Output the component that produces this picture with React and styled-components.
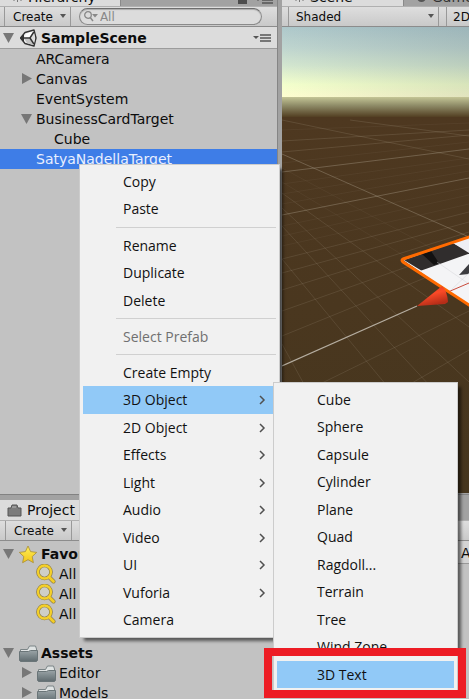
import React from "react";
import styled, { createGlobalStyle, css } from "styled-components";

const GlobalStyle = createGlobalStyle`
  * { box-sizing: border-box; }
  body { margin: 0; background: #a2a2a2; }
  button, input, select { font: inherit; color: inherit; }
`;

const Editor = styled.main`
  position: relative;
  display: grid;
  grid-template-rows: 1fr 205px;
  min-height: 100vh;
  overflow: hidden;
  background: #a2a2a2;
  color: #0c0c0c;
  font: 14px/20px "DejaVu Sans", Verdana, sans-serif;
`;

const UpperDock = styled.div`
  display: grid;
  grid-template-columns: 277px 1fr;
  column-gap: 5px;
  min-width: 0;
`;

const Panel = styled.section`
  display: flex;
  flex-direction: column;
  min-width: 0;
  overflow: hidden;
`;

const HierarchyPanel = styled(Panel)`
  background: #c2c2c2;
  border-right: 1px solid #858585;
  margin-right: -1px;
`;

const ScenePanel = styled(Panel)`
  margin-bottom: 1px;
`;

const TabStrip = styled.div`
  display: flex;
  flex: none;
  align-items: flex-end;
  height: 6px;
  overflow: hidden;
  background: #a2a2a2;
  font-size: 14px;
  line-height: 14px;
`;

const Tab = styled.div`
  display: flex;
  flex: none;
  align-items: center;
  gap: 5px;
  width: ${(p) => p.$width}px;
  height: 16px;
  padding-left: 12px;
  padding-bottom: 2px;
  color: ${(p) => (p.$active ? "#111" : "#333")};
  background: ${(p) => (p.$active ? "#dcdcdc" : "#a2a2a2")};
  border-right: 1px solid #8a8a8a;
`;

const TabActions = styled.div`
  display: flex;
  align-items: flex-end;
  gap: 8px;
  margin-left: auto;
  padding: 0 4px 2px 0;
`;

const Toolbar = styled.div`
  display: flex;
  flex: none;
  height: 21px;
  padding-left: ${(p) => p.$inset || 4}px;
  background: linear-gradient(#dedede, #c9c9c9);
  border-top: 1px solid #b0b0b0;
  border-bottom: 1px solid #8c8c8c;
  font-size: 12px;
`;

const ToolButton = styled.button`
  display: flex;
  align-items: center;
  gap: 7px;
  padding: 0 4px 0 8px;
  background: none;
  border: 0;
  border-left: 1px solid #999;
  border-right: 1px solid #999;
`;

const ToolSelect = styled.label`
  display: flex;
  align-items: center;
  width: 151px;
  flex: none;
  padding-right: 4px;
  border-left: 1px solid #999;
  border-right: 1px solid #999;
`;

const Select = styled.select`
  flex: 1;
  min-width: 0;
  padding: 0 0 0 7px;
  appearance: none;
  background: none;
  border: 0;
`;

const TwoD = styled(ToolButton)`
  flex: none;
  margin-left: 7px;
  padding-left: 6px;
`;

const SearchBox = styled.label`
  display: flex;
  flex: 1;
  align-items: center;
  gap: 1px;
  height: 17px;
  margin: 1px 15px 0 8px;
  padding-left: 4px;
  color: #888;
  background: #dcdcdc;
  border: 1px solid #8a8a8a;
  border-top-color: #6e6e6e;
  border-radius: 9px;
  box-shadow: inset 0 1px 1px #aaa;
`;

const SearchInput = styled.input`
  flex: 1;
  min-width: 0;
  padding: 0;
  line-height: 14px;
  background: none;
  border: 0;
  outline: 0;
  &::placeholder { color: #888; opacity: 1; }
`;

const SceneHeader = styled.div`
  display: flex;
  flex: none;
  align-items: center;
  height: 22px;
  padding: 0 6px 0 3px;
  background: #dcdcdc;
  border-bottom: 1px solid #9c9c9c;
  font-weight: bold;
`;

const HeaderMenuButton = styled.button`
  display: flex;
  margin-left: auto;
  padding: 0;
  background: none;
  border: 0;
`;

const Tree = styled.ul`
  margin: 0;
  padding: 0;
  list-style: none;
`;

const TreeRow = styled.li`
  display: flex;
  align-items: center;
  height: 20px;
  padding-left: ${(p) => p.$level * 18 + 3}px;
  line-height: 18px;
  white-space: nowrap;
  ${(p) => p.$bold && css`font-weight: bold;`}
  ${(p) => p.$selected && css`color: #e8efff; background: #3e7de7;`}
`;

const Foldout = styled.button`
  display: flex;
  flex: none;
  width: 15px;
  padding: 0;
  background: none;
  border: 0;
`;

const FoldSpace = styled.span`
  flex: none;
  width: 15px;
`;

const RowIcon = styled.span`
  display: flex;
  flex: none;
  justify-content: center;
  width: 20px;
  margin-right: 3px;
`;

const SceneView = styled.svg`
  display: block;
  flex: 1 1 0;
  width: 100%;
  min-height: 0;
`;

const ProjectPanel = styled(Panel)`
  border-top: 1px solid #828282;
  padding-top: 5px;
`;

const ProjectTabs = styled.div`
  display: flex;
  flex: none;
  height: 20px;
`;

const ProjectTab = styled.div`
  display: flex;
  align-items: center;
  gap: 5px;
  width: 90px;
  padding-left: 7px;
  background: #dcdcdc;
`;

const ProjectBody = styled.div`
  display: grid;
  grid-template-columns: 453px 1fr;
  flex: 1;
  background: #c2c2c2;
`;

const ProjectTree = styled(Tree)`
  padding-top: 3px;
  & > li:nth-child(4) { margin-bottom: 19px; }
`;

const Breadcrumb = styled.div`
  height: 23px;
  padding-left: 8px;
  overflow: hidden;
  line-height: 24px;
  background: #d4d4d4;
  border-bottom: 1px solid #999;
`;

const Menu = styled.div`
  position: absolute;
  top: ${(p) => p.$top}px;
  left: ${(p) => p.$left}px;
  width: ${(p) => p.$width}px;
  padding: 3px;
  color: #111;
  background: #f1f1f1;
  border: 1px solid #ccc;
  box-shadow: 4px 4px 3px -1px rgba(0, 0, 0, 0.55);
  font: 14px/20px "Open Sans", "Segoe UI", sans-serif;
`;

const MenuGroup = styled.div`
  display: grid;
  grid-auto-rows: 27px 28px;

  & + & {
    margin-top: 4px;
    padding-top: 4px;
    border-top: 1px solid;
    border-image: linear-gradient(90deg, transparent 34px, #d0d0d0 34px) 1;
  }
`;

const MenuItem = styled.button`
  display: flex;
  align-items: center;
  justify-content: space-between;
  padding: 0 10px 0 40px;
  text-align: left;
  background: ${(p) => (p.$open ? "#91c9f7" : "transparent")};
  border: 0;
  &:disabled { color: #707070; }
`;

const Highlight = styled.div`
  position: absolute;
  top: 648px;
  left: 264px;
  width: 202px;
  height: 50px;
  border: 8px solid #ed1c24;
  pointer-events: none;
`;

const Triangle = ({ open }) => (
  <svg width="12" height="12" viewBox="0 0 12 12" aria-hidden="true">
    <path d={open ? "M0 1h11L5.500 11z" : "M1 0v11L11 5.500z"} fill="#777" />
  </svg>
);

const Caret = () => (
  <svg width="6" height="6" viewBox="0 0 6 6" aria-hidden="true">
    <path d="M0 0h6L3 4z" fill="#555" />
  </svg>
);

const ListMenuIcon = () => (
  <svg width="18" height="8" viewBox="0 0 18 8" aria-hidden="true">
    <path d="M0 2h6L3 5z" fill="#555" />
    <path d="M7 1h11M7 4h11M7 7h11" stroke="#555" strokeWidth="1.400" />
  </svg>
);

const LockIcon = () => (
  <svg width="9" height="8" viewBox="0 0 9 8" aria-hidden="true">
    <path d="M0 3h9v5H0z" fill="#4c4c4c" />
    <path d="M2 4V1h5v3" fill="none" stroke="#4c4c4c" />
  </svg>
);

const SearchIcon = () => (
  <svg width="15" height="11" viewBox="0 0 15 11" aria-hidden="true">
    <circle cx="4" cy="4" r="3.300" fill="none" stroke="#888" strokeWidth="1.300" />
    <path d="M6.200 6.500 9 10" stroke="#888" strokeWidth="1.500" />
    <path d="M8 3h6l-3 3.500z" fill="#888" />
  </svg>
);

const UnityIcon = () => (
  <svg width="17" height="18" viewBox="0 0 17 18" aria-hidden="true">
    <path d="M.5 9 5 3.500 14 1l2 8-2 8-9-2.500z" fill="#f2f2f2" stroke="#333" strokeWidth="1.400" strokeLinejoin="round" />
    <path d="M4 9 7 4.500 13 2.500 10 8.300z" fill="#fff" />
    <path d="M4 9.500 7 14l6 2-3-6.300z" fill="#c4c4c4" />
    <path d="M11 9 14 3.500 15 9l-1 5.500z" fill="#dedede" />
    <path d="M3.500 9H10l3.800-6M10 9l3.800 6" fill="none" stroke="#333" strokeWidth="1.500" />
    <path d="M0 9 4 5v8z" fill="#333" />
  </svg>
);

const StarIcon = () => (
  <svg width="20" height="19" viewBox="0 0 20 19" aria-hidden="true">
    <defs>
      <linearGradient id="star" x2="0" y2="1">
        <stop stopColor="#fff05a" />
        <stop offset="1" stopColor="#f2c518" />
      </linearGradient>
    </defs>
    <path d="m10 1 2.600 5.600 6.100.8-4.500 4.200 1.200 6.100L10 14.700l-5.400 3 1.200-6.100L1.300 7.400l6.100-.8z" fill="url(#star)" stroke="#a68b35" strokeWidth=".8" strokeLinejoin="round" />
  </svg>
);

const GoldSearchIcon = () => (
  <svg width="20" height="20" viewBox="0 0 20 20" aria-hidden="true">
    <path d="m13 13 4.500 4.500" stroke="#8a7a45" strokeWidth="4" strokeLinecap="round" />
    <circle cx="8.500" cy="8" r="6.500" fill="#cfcfc6" stroke="#8a7a45" strokeWidth="3.600" />
    <path d="m13 13 4.500 4.500" stroke="#f4cd25" strokeWidth="2.800" strokeLinecap="round" />
    <circle cx="8.500" cy="8" r="6.500" fill="none" stroke="#f4d02b" strokeWidth="2.300" />
  </svg>
);

const FolderIcon = () => (
  <svg width="19" height="17" viewBox="0 0 19 17" aria-hidden="true">
    <defs>
      <linearGradient id="folder" x2="0" y2="1">
        <stop stopColor="#9aa4a7" />
        <stop offset="1" stopColor="#5f6b6f" />
      </linearGradient>
    </defs>
    <path d="M1.500 4.500h7l2-3.500h6l1 3v11h-16z" fill="#dfe3e3" stroke="#7b8486" />
    <path d="M.5 6.500h9l2-1h7v10l-1 1h-16l-1-1z" fill="url(#folder)" stroke="#6a7578" />
  </svg>
);

const SmallFolderIcon = () => (
  <svg width="15" height="13" viewBox="0 0 15 13" aria-hidden="true">
    <path d="M1 4h3l1-3h5l1 3h3v8H1z" fill="#7c7c7c" stroke="#555" strokeLinejoin="round" />
    <path d="M5 4V2h4v2" fill="#999" />
  </svg>
);

const Chevron = () => (
  <svg width="8" height="10" viewBox="0 0 8 10" aria-hidden="true">
    <path d="m2 1 4 4-4 4" fill="none" stroke="#505050" strokeWidth="1.500" />
  </svg>
);

const HashIcon = () => (
  <svg width="11" height="10" viewBox="0 0 11 10" aria-hidden="true">
    <path d="M2 1v8M5.500 0v10M9 1v8M0 3h11" stroke="#777" />
  </svg>
);

const GameIcon = () => (
  <svg width="11" height="11" viewBox="0 0 11 11" aria-hidden="true">
    <circle cx="5.500" cy="5.500" r="4.500" fill="#555" />
  </svg>
);

const majorLines = [
  [282, 215, 469, 178], [282, 172, 469, 149], [282, 152, 469, 135],
  [282, 141, 469, 130], [282, 154, 469, 237], [282, 120, 469, 159],
  [350, 120, 469, 136],
];

const minorLines = [
  [282, 259, 387, 386], [282, 344, 305, 386], [282, 208, 469, 382],
  [282, 193, 469, 327], [282, 182, 469, 295], [282, 168, 469, 268],
  [282, 226, 430, 386], [322, 383, 469, 311], [412, 383, 469, 350],
  [282, 336, 469, 260], [282, 311, 469, 245], [282, 290, 469, 232],
  [282, 273, 469, 222], [282, 259, 469, 212], [282, 246, 469, 204],
  [282, 236, 469, 195], [282, 226, 469, 187], [282, 204, 469, 171],
  [282, 194, 469, 164], [282, 184, 469, 158], [282, 163, 469, 142],
  [282, 130, 469, 123],
];

const Scene = () => (
  <SceneView viewBox="282 27 187 466" preserveAspectRatio="xMinYMin slice" role="img" aria-label="Scene">
    <defs>
      <linearGradient id="sky" x2="0" y2="1">
        <stop stopColor="#aec8cb" />
        <stop offset=".3" stopColor="#bfd5cf" />
        <stop offset=".55" stopColor="#d3e6cf" />
        <stop offset=".82" stopColor="#f3ffcc" />
        <stop offset="1" stopColor="#fffed0" />
      </linearGradient>
      <linearGradient id="shade">
        <stop stopColor="#304050" stopOpacity="0" />
        <stop offset="1" stopColor="#304050" stopOpacity=".14" />
      </linearGradient>
      <linearGradient id="haze" x2="0" y2="1">
        <stop stopColor="#c4c596" />
        <stop offset=".4" stopColor="#8f8c68" />
        <stop offset="1" stopColor="#4d381c" />
      </linearGradient>
      <linearGradient id="ground" x2="0" y2="1">
        <stop stopColor="#4e3820" />
        <stop offset="1" stopColor="#46361e" />
      </linearGradient>
      <linearGradient id="cone" x2=".4" y2="1">
        <stop stopColor="#d33a20" />
        <stop offset=".5" stopColor="#fb4a27" />
        <stop offset="1" stopColor="#b52d18" />
      </linearGradient>
    </defs>
    <path d="M282 27h187v70H282z" fill="url(#sky)" />
    <path d="M282 27h187v70H282z" fill="url(#shade)" />
    <path d="M282 97h187v21H282z" fill="url(#haze)" />
    <path d="M282 117h187v376H282z" fill="url(#ground)" />
    {minorLines.map(([x1, y1, x2, y2], i) => (
      <line key={i} x1={x1} y1={y1} x2={x2} y2={y2} stroke="#b5aa96" strokeOpacity={y1 > 250 || y2 > 300 ? 0.16 : 0.07} />
    ))}
    {majorLines.map(([x1, y1, x2, y2], i) => (
      <line key={i} x1={x1} y1={y1} x2={x2} y2={y2} stroke="#b5aa96" strokeOpacity={i > 1 && i !== 4 ? 0.18 : 0.36} />
    ))}
    <path d="M282 366 417 306" stroke="#b5ada0" strokeWidth="1.200" />
    <path d="M403 260 475 235v75z" fill="#f4f4f6" />
    <path d="m404 260 49-17 20 11-51 17z" fill="#302d2d" />
    <path d="m422 254 9-3 8 12-5 2z" fill="#121111" />
    <path d="m420 271 48-17h5v30l-23 6z" fill="#f4f4f6" />
    <path d="m453 243 16-5v15z" fill="#eeeef4" />
    <path d="m459 275 10-11v10z" fill="#3c3c40" />
    <path d="M451 290l18-17M437 262l32 22" stroke="#d5d5d9" strokeWidth=".5" />
    <path d="m448 292 21-9" stroke="#c94b3c" />
    <path d="m475 235-72 24q-2 1 0 3l72 47" fill="none" stroke="#ff6a00" strokeWidth="3" strokeLinejoin="round" />
    <path d="m417 306 25-20q5 4 6 16l-3 2z" fill="url(#cone)" />
  </SceneView>
);

const hierarchy = [
  { name: "ARCamera", level: 1 },
  { name: "Canvas", level: 1, fold: "closed" },
  { name: "EventSystem", level: 1 },
  { name: "BusinessCardTarget", level: 1, fold: "open" },
  { name: "Cube", level: 2 },
  { name: "SatyaNadellaTarget", level: 1, selected: true },
];

const projectItems = [
  { name: "Favorites", level: 0, fold: "open", bold: true, Icon: StarIcon },
  { name: "All", level: 1, Icon: GoldSearchIcon },
  { name: "All", level: 1, Icon: GoldSearchIcon },
  { name: "All", level: 1, Icon: GoldSearchIcon },
  { name: "Assets", level: 0, fold: "open", bold: true, Icon: FolderIcon },
  { name: "Editor", level: 1, fold: "closed", Icon: FolderIcon },
  { name: "Models", level: 1, fold: "closed", Icon: FolderIcon },
];

const contextGroups = [
  [{ name: "Copy" }, { name: "Paste" }],
  [{ name: "Rename" }, { name: "Duplicate" }, { name: "Delete" }],
  [{ name: "Select Prefab", disabled: true }],
  [
    { name: "Create Empty" },
    { name: "3D Object", sub: true, open: true },
    { name: "2D Object", sub: true },
    { name: "Effects", sub: true },
    { name: "Light", sub: true },
    { name: "Audio", sub: true },
    { name: "Video", sub: true },
    { name: "UI", sub: true },
    { name: "Vuforia", sub: true },
    { name: "Camera" },
  ],
];

const objectGroups = [
  ["Cube", "Sphere", "Capsule", "Cylinder", "Plane", "Quad", "Ragdoll...", "Terrain", "Tree", "Wind Zone", "3D Text"].map(
    (name) => ({ name, open: name === "3D Text" })
  ),
];

const TreeItem = ({ item }) => {
  const { name, level, fold, bold, selected, Icon } = item;
  return (
    <TreeRow $level={level} $bold={bold} $selected={selected}>
      {fold ? (
        <Foldout aria-label={`Toggle ${name}`} aria-expanded={fold === "open"}>
          <Triangle open={fold === "open"} />
        </Foldout>
      ) : (
        <FoldSpace />
      )}
      {Icon && <RowIcon><Icon /></RowIcon>}
      {name}
    </TreeRow>
  );
};

const PopupMenu = ({ label, groups, ...place }) => (
  <Menu role="menu" aria-label={label} {...place}>
    {groups.map((items, i) => (
      <MenuGroup key={i} role="group">
        {items.map(({ name, sub, open, disabled }) => (
          <MenuItem key={name} role="menuitem" $open={open} disabled={disabled} aria-haspopup={sub ? "menu" : undefined}>
            {name}
            {sub && <Chevron />}
          </MenuItem>
        ))}
      </MenuGroup>
    ))}
  </Menu>
);

export default function App() {
  return (
    <Editor>
      <GlobalStyle />
      <UpperDock>
        <HierarchyPanel>
          <TabStrip>
            <Tab $active $width={121}><HashIcon />Hierarchy</Tab>
            <TabActions><LockIcon /><ListMenuIcon /></TabActions>
          </TabStrip>
          <Toolbar>
            <ToolButton>Create<Caret /></ToolButton>
            <SearchBox>
              <SearchIcon />
              <SearchInput aria-label="Search hierarchy" placeholder="All" />
            </SearchBox>
          </Toolbar>
          <SceneHeader>
            <Foldout aria-label="Toggle SampleScene" aria-expanded="true"><Triangle open /></Foldout>
            <RowIcon><UnityIcon /></RowIcon>
            SampleScene
            <HeaderMenuButton aria-label="Scene options"><ListMenuIcon /></HeaderMenuButton>
          </SceneHeader>
          <Tree>
            {hierarchy.map((item) => <TreeItem key={item.name} item={item} />)}
          </Tree>
        </HierarchyPanel>
        <ScenePanel>
          <TabStrip>
            <Tab $active $width={122}><HashIcon />Scene</Tab>
            <Tab $width={122}><GameIcon />Game</Tab>
          </TabStrip>
          <Toolbar $inset={6}>
            <ToolSelect>
              <Select aria-label="Draw mode" defaultValue="Shaded">
                <option>Shaded</option>
              </Select>
              <Caret />
            </ToolSelect>
            <TwoD>2D</TwoD>
          </Toolbar>
          <Scene />
        </ScenePanel>
      </UpperDock>
      <ProjectPanel>
        <ProjectTabs>
          <ProjectTab><SmallFolderIcon />Project</ProjectTab>
        </ProjectTabs>
        <Toolbar $inset={5}>
          <ToolButton>Create<Caret /></ToolButton>
        </Toolbar>
        <ProjectBody>
          <ProjectTree>
            {projectItems.map((item, i) => <TreeItem key={i} item={item} />)}
          </ProjectTree>
          <Breadcrumb>Assets</Breadcrumb>
        </ProjectBody>
      </ProjectPanel>
      <PopupMenu label="Hierarchy context menu" groups={contextGroups} $top={164} $left={79} $width={201} />
      <PopupMenu label="3D Object" groups={objectGroups} $top={382} $left={273} $width={185} />
      <Highlight />
    </Editor>
  );
}
